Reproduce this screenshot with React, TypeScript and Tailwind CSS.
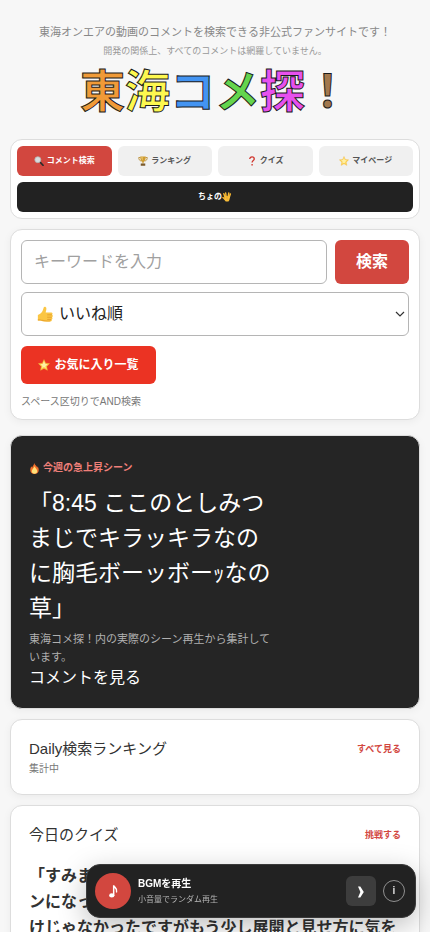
import React from "react";

const FONT = "font-['Liberation_Sans','Noto_Sans_CJK_JP',sans-serif]";
const CARD = "rounded-xl border border-[#dddddd] bg-white shadow-[0_2px_8px_rgba(0,0,0,0.05)]";

function Magnifier() {
  return (
    <svg viewBox="0 0 20 20" className="size-[10px] shrink-0" aria-hidden="true">
      <path d="M11.5 11.5 18 18.5" stroke="#2b2b2b" strokeWidth="3.6" strokeLinecap="round" />
      <circle cx="7.6" cy="7.4" r="6" fill="#d6dcde" stroke="#b5b2b0" strokeWidth="1.6" />
    </svg>
  );
}

function Trophy() {
  return (
    <svg viewBox="0 0 20 20" className="size-[10px] shrink-0" aria-hidden="true">
      <path d="M5 3H1.500c0 4 1.500 6.500 5 7M15 3h3.500c0 4-1.500 6.500-5 7" fill="none" stroke="#b8892b" strokeWidth="1.700" />
      <path d="M4.500 1h11c0 6-1.200 9.500-4.300 11v3h-2.400v-3C5.700 10.500 4.500 7 4.500 1Z" fill="#cf9c30" />
      <path d="M7 2h2v7C7.500 7 7 5 7 2Z" fill="#f3d687" />
      <path d="M5.500 15h9v4.500h-9z" fill="#7b5a2b" />
    </svg>
  );
}

function Question() {
  return (
    <svg viewBox="0 0 20 20" className="size-[10px] shrink-0" aria-hidden="true">
      <path d="M5.500 6C5.500 3 7.500 1.800 10 1.800s4.500 1.500 4.500 4C14.500 9 10.200 9 10.200 13" fill="none" stroke="#d0342c" strokeWidth="2.600" />
      <circle cx="10.200" cy="17.500" r="1.700" fill="#d0342c" />
    </svg>
  );
}

function Star({ className }: { className: string }) {
  return (
    <svg viewBox="0 0 20 20" className={className} aria-hidden="true">
      <path
        d="m10 .8 2.800 6.100 6.600.8-4.900 4.600 1.300 6.600L10 15.700l-5.800 3.200 1.300-6.600L.6 7.700l6.600-.8Z"
        fill="#fbcf4b"
        stroke="#f2b53a"
        strokeWidth=".6"
        strokeLinejoin="round"
      />
      <path d="m10 3.500 1.800 4.600 4 .6-3.400 3.300.6 3-3-1.600-3.500 1.700.8-3.600-3.300-2.800 4-.5Z" fill="#fff0a5" />
    </svg>
  );
}

function Vulcan() {
  return (
    <svg viewBox="0 0 20 20" className="size-[10px] shrink-0" aria-hidden="true">
      <g stroke="#f7b731" strokeWidth="2.900" strokeLinecap="round">
        <path d="M6 10 3.700 3.500M8.300 9 7.300 2M12.300 9l1.200-7M14.500 10.500 16.700 4" />
        <path d="M6.500 15.500 2 11" />
      </g>
      <path d="M4.500 9.500 10 8l5.800 1.500c0 4-1 7.500-3 9.700H7.500C5.500 17 4.500 14 4.500 9.500Z" fill="#f9bd38" />
      <path d="M10 9.500c-.5 2-.5 3.500 1.500 5.500" stroke="#d8912a" strokeWidth="1" fill="none" />
    </svg>
  );
}

function ThumbsUp() {
  return (
    <svg viewBox="0 0 20 20" className="size-[17px]" aria-hidden="true">
      <path
        d="M1 10.500c2.500-.6 4-2 5.500-4.500C7.300 4.600 7.500 3 8 1.600 8.500.4 10.800.7 11 2.700c.2 1.800-.5 3.300-.8 4.800h6.500c1.800 0 2.200 2 .9 2.800 1.500.6 1.300 2.500 0 2.900 1.100.8.700 2.400-.5 2.600.8 1 .2 2.200-1.300 2.300-3.300.3-7 .3-9.300-.3-1.700-.5-3-.6-5.500-.6Z"
        fill="#fbc644"
      />
      <path d="M12 10.400h5.500M12 13.200h5.300M12 15.800h4.800" stroke="#dd9425" strokeWidth=".8" />
      <path d="M1 15.500c2.500 0 4 .3 5.500.8 3 .9 6 .8 9.800.5-.2.800-.8 1.200-1.500 1.300-3 .2-6 .2-8.300-.4-1.700-.4-3-.5-5.500-.5Z" fill="#eba62f" />
    </svg>
  );
}

function Flame() {
  return (
    <svg viewBox="0 0 20 20" className="size-[11px] shrink-0" aria-hidden="true">
      <path d="M9.500 0c.3 3 5 5 5.200 8.500.8-.8.900-1.800.8-2.800 1.500 2 2.200 4.300 2.200 6.800 0 4.500-3.200 7.500-7.700 7.500s-7.700-3-7.700-7.500c0-3 1.300-4.500 2.300-6.500.2 1.200.4 2 1.200 2.700C6.300 5.500 9.500 3.500 9.500 0Z" fill="#f2702b" />
      <path d="M10 6c.5 2.500 5 5 5 9 0 2.900-2.200 4.500-5 4.500S5 17.900 5 15C5 11.500 9 9.500 10 6Z" fill="#ffe27a" />
    </svg>
  );
}

const TITLE = [
  { ch: "東", color: "text-[#f09a37]" },
  { ch: "海", color: "text-[#fdf84f]" },
  { ch: "コ", color: "text-[#4394f2]" },
  { ch: "メ", color: "text-[#64d54e]" },
  { ch: "探", color: "text-[#e750ee]" },
  { ch: "！", color: "text-[#a3784c]" },
];

const NAV = [
  { label: "コメント検索", icon: <Magnifier />, tone: "bg-[#d2473f] text-white" },
  { label: "ランキング", icon: <Trophy />, tone: "bg-[#f0f0f0] text-[#555555]" },
  { label: "クイズ", icon: <Question />, tone: "bg-[#f0f0f0] text-[#555555]" },
  { label: "マイページ", icon: <Star className="size-[10px] shrink-0" />, tone: "bg-[#f0f0f0] text-[#555555]" },
];

function Header() {
  return (
    <header className="flex flex-col items-center text-center text-[#888888]">
      <p className="text-[11px] leading-[22px]">東海オンエアの動画のコメントを検索できる非公式ファンサイトです！</p>
      <p className="text-[9px] leading-4 text-[#999999]">開発の関係上、すべてのコメントは網羅していません。</p>
      <h1 className="flex text-[45px] font-bold leading-[68px] [-webkit-text-stroke:1px_#1a1a1a]">
        {TITLE.map((t) => (
          <span key={t.ch} className={t.color}>
            {t.ch}
          </span>
        ))}
      </h1>
    </header>
  );
}

function Nav() {
  return (
    <nav className="mt-3 grid grid-cols-4 gap-1.5 rounded-xl border border-[#dddddd] bg-white p-1.5">
      {NAV.map((n) => (
        <a
          key={n.label}
          href="#"
          className={`flex h-[30px] items-center justify-center gap-[3px] rounded-md text-[8px] font-bold ${n.tone}`}
        >
          {n.icon}
          {n.label}
        </a>
      ))}
      <a
        href="#"
        className="col-span-4 flex h-[30px] items-center justify-center rounded-md bg-[#222222] text-[8px] font-bold text-white"
      >
        ちょの
        <Vulcan />
      </a>
    </nav>
  );
}

function Search() {
  return (
    <form className={`mt-2.5 p-2.5 ${CARD}`} onSubmit={(e) => e.preventDefault()}>
      <div className="flex gap-2">
        <input
          type="text"
          aria-label="キーワード"
          placeholder="キーワードを入力"
          className="h-11 min-w-0 flex-1 rounded-md border border-[#b5b5b5] bg-white px-3 text-base text-[#222222] placeholder:text-[#a0a0a0]"
        />
        <button type="submit" className="h-11 w-[74px] rounded-md bg-[#d2473f] text-base font-bold text-white">
          検索
        </button>
      </div>
      <div className="relative mt-2">
        <select
          aria-label="並び順"
          className="block h-11 w-full appearance-none rounded-md border border-[#b5b5b5] bg-white pl-[37px] pr-6 text-base text-[#222222]"
        >
          <option>いいね順</option>
        </select>
        <span className="pointer-events-none absolute inset-y-0 left-4 flex items-center">
          <ThumbsUp />
        </span>
        <span className="pointer-events-none absolute inset-y-0 right-1 flex items-center">
          <svg viewBox="0 0 10 10" className="size-[10px]" aria-hidden="true">
            <path d="m1 3 4 4 4-4" fill="none" stroke="#333333" strokeWidth="1.200" />
          </svg>
        </span>
      </div>
      <button
        type="button"
        className="mt-2.5 flex h-[38px] w-[135px] items-center justify-center gap-1 rounded-md bg-[#eb3323] text-xs font-bold text-white"
      >
        <Star className="size-3 shrink-0" />
        お気に入り一覧
      </button>
      <p className="mt-2.5 text-[10px] leading-[15px] text-[#777777]">スペース区切りでAND検索</p>
    </form>
  );
}

function Trending() {
  return (
    <section className="mt-[15px] rounded-xl border border-[#dddddd] bg-[#252525] px-[18px] pb-[18px] pt-6 text-white shadow-[0_2px_8px_rgba(0,0,0,0.05)]">
      <p className="flex items-center gap-[3px] text-[10px] font-bold leading-4 text-[#ef7f79]">
        <Flame />
        今週の急上昇シーン
      </p>
      <h2 className="mt-2.5 max-w-[245px] text-[23px] leading-[35px]">
        「8:45 ここのとしみつまじでキラッキラなのに胸毛ボーッボーｯなの草」
      </h2>
      <p className="mt-1 max-w-[245px] text-[11px] leading-[18px] text-[#b0b0b0]">
        東海コメ探！内の実際のシーン再生から集計しています。
      </p>
      <a href="#" className="block text-base leading-6">
        コメントを見る
      </a>
    </section>
  );
}

function CardHead({ title, action }: { title: string; action: string }) {
  return (
    <div className="flex items-center justify-between">
      <h2 className="text-[15px] leading-6 text-[#333333]">{title}</h2>
      <a href="#" className="text-[9px] font-bold leading-4 text-[#d2473f]">
        {action}
      </a>
    </div>
  );
}

function Player() {
  return (
    <aside className="fixed bottom-[14px] right-[14px] flex h-[54px] w-[330px] items-center rounded-[14px] border border-[#3a3a3a] bg-[#222222] px-2 text-white shadow-[0_8px_28px_rgba(0,0,0,0.25)]">
      <button type="button" aria-label="再生" className="flex size-9 items-center justify-center rounded-full bg-[#d2473f]">
        <svg viewBox="0 0 12 16" className="h-[14px] w-[11px]" aria-hidden="true">
          <ellipse cx="4" cy="13" rx="3" ry="2.300" fill="#ffffff" />
          <path d="M6.200 13V1.500c.4 2.500 4.500 3.200 3.300 7.500" fill="none" stroke="#ffffff" strokeWidth="1.700" strokeLinecap="round" />
        </svg>
      </button>
      <div className="ml-[7px] flex-1 pt-0.5">
        <p className="text-[10px] font-bold leading-4">BGMを再生</p>
        <p className="text-[8px] leading-4 text-[#b5b5b5]">小音量でランダム再生</p>
      </div>
      <button type="button" aria-label="閉じる" className="flex size-[30px] items-center justify-center rounded-md bg-[#3d3d3d]">
        <svg viewBox="0 0 8 12" className="mt-0.5 h-3 w-2" aria-hidden="true">
          <path d="M1 .5h2.300L6.800 6 3.300 11.500H1L3.400 6Z" fill="#ffffff" />
        </svg>
      </button>
      <button
        type="button"
        aria-label="情報"
        className="ml-[7px] mr-0.5 flex size-[22px] items-center justify-center rounded-full border border-[#909090] text-[10px] font-bold leading-none text-[#dddddd]"
      >
        i
      </button>
    </aside>
  );
}

export default function App() {
  return (
    <div className={`min-h-screen bg-[#f7f7f7] px-2.5 pb-20 pt-[21px] ${FONT}`}>
      <Header />
      <Nav />
      <Search />
      <Trending />
      <section className={`mt-2.5 px-[18px] pb-[17px] pt-[17px] ${CARD}`}>
        <CardHead title="Daily検索ランキング" action="すべて見る" />
        <p className="text-[10px] leading-4 text-[#777777]">集計中</p>
      </section>
      <section className={`mt-2.5 px-[18px] pb-[18px] pt-[17px] ${CARD}`}>
        <CardHead title="今日のクイズ" action="挑戦する" />
        <p className="mt-4 text-base font-bold leading-[26px] text-[#333333]">
          「すみま
          <br />
          ンになっ
          <br />
          けじゃなかったですがもう少し展開と見せ方に気を
        </p>
      </section>
      <Player />
    </div>
  );
}
